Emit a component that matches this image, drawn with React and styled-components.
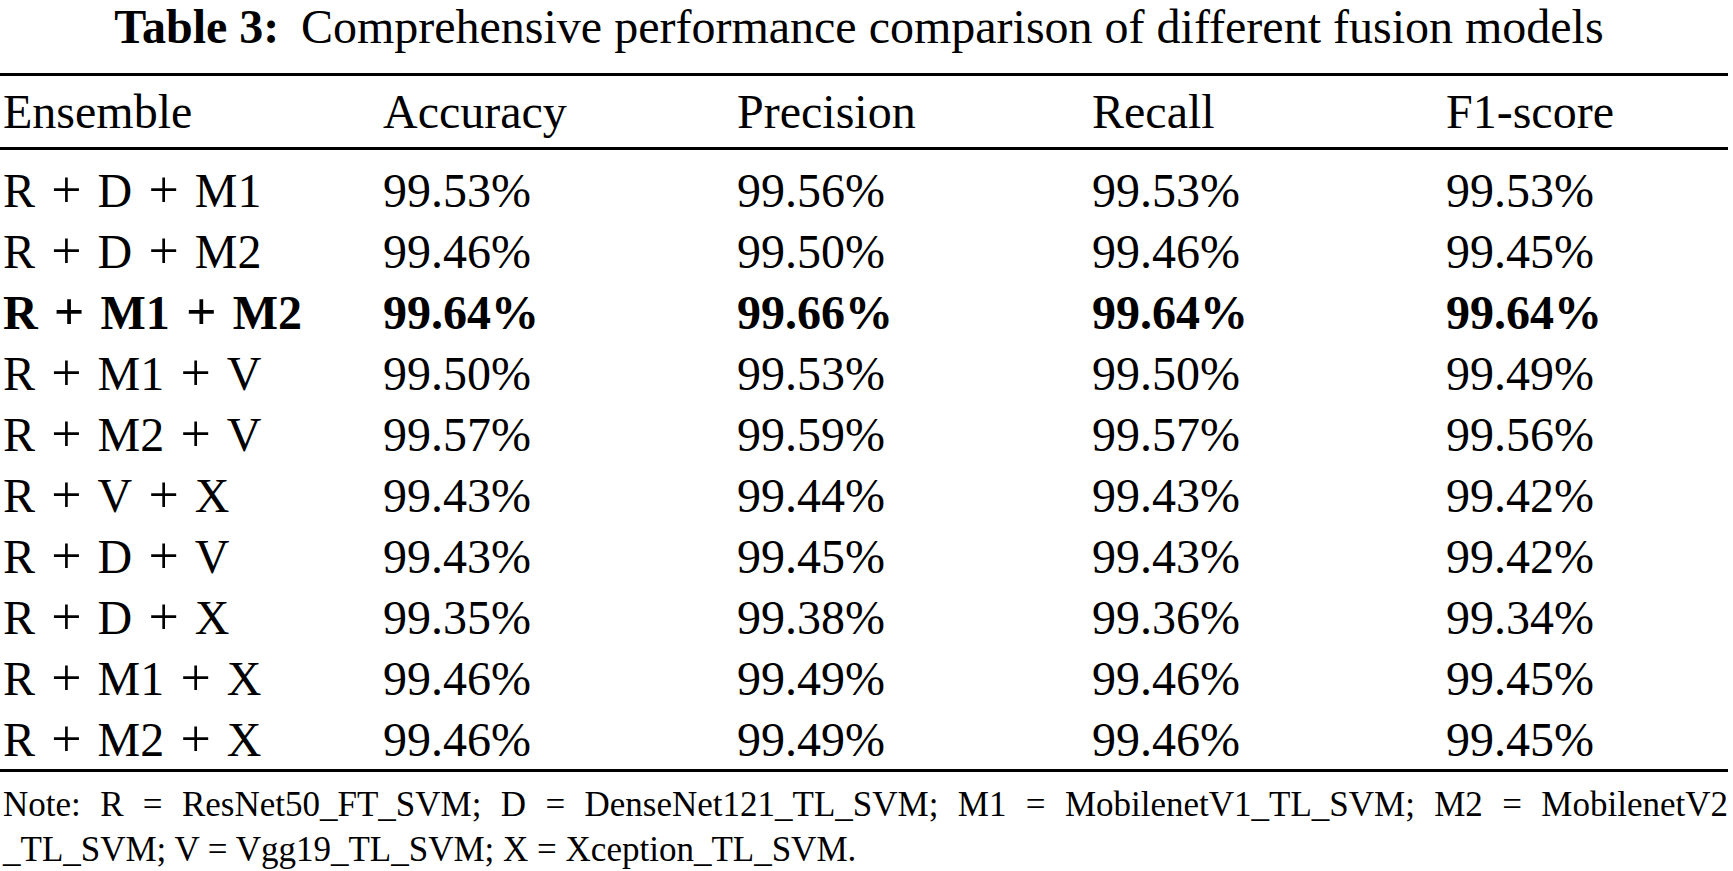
import React from "react";
import styled, { createGlobalStyle } from "styled-components";

const GlobalStyle = createGlobalStyle`
  html, body {
    margin: 0;
    padding: 0;
    background: #ffffff;
  }
  body {
    font-family: "Liberation Serif", "Times New Roman", serif;
    color: #000000;
  }
`;

const rows = [
  { name: "R + D + M1", values: ["99.53%", "99.56%", "99.53%", "99.53%"] },
  { name: "R + D + M2", values: ["99.46%", "99.50%", "99.46%", "99.45%"] },
  { name: "R + M1 + M2", values: ["99.64%", "99.66%", "99.64%", "99.64%"], best: true },
  { name: "R + M1 + V", values: ["99.50%", "99.53%", "99.50%", "99.49%"] },
  { name: "R + M2 + V", values: ["99.57%", "99.59%", "99.57%", "99.56%"] },
  { name: "R + V + X", values: ["99.43%", "99.44%", "99.43%", "99.42%"] },
  { name: "R + D + V", values: ["99.43%", "99.45%", "99.43%", "99.42%"] },
  { name: "R + D + X", values: ["99.35%", "99.38%", "99.36%", "99.34%"] },
  { name: "R + M1 + X", values: ["99.46%", "99.49%", "99.46%", "99.45%"] },
  { name: "R + M2 + X", values: ["99.46%", "99.49%", "99.46%", "99.45%"] },
];

const headers = ["Ensemble", "Accuracy", "Precision", "Recall", "F1-score"];

const Page = styled.div`
  width: 1728px;
  display: flex;
  flex-direction: column;
`;

const Caption = styled.div`
  font-size: 48px;
  line-height: 53px;
  text-align: center;
  padding-right: 10px;
  margin-bottom: 20px;
  white-space: nowrap;
`;

const CaptionLabel = styled.span`
  font-weight: 700;
  margin-right: 0.45em;
`;

const Rule = styled.div`
  height: 3px;
  background: #000000;
`;

const Row = styled.div`
  display: grid;
  grid-template-columns: 380px 354px 355px 354px 1fr;
  height: ${(p) => p.$height}px;
  align-items: center;
  font-size: 48px;
  line-height: ${(p) => p.$height}px;
  font-weight: ${(p) => (p.$bold ? 700 : 400)};
`;

const Cell = styled.div`
  padding-left: 3px;
  white-space: nowrap;
`;

const Plus = styled.span`
  font-size: 1.12em;
  margin: 0 0.3em;
`;

const Body = styled.div`
  display: flex;
  flex-direction: column;
  padding-top: 9px;
`;

const Note = styled.div`
  margin-top: 10px;
  font-size: 35px;
  line-height: 45px;
  padding-left: 3px;
`;

const NoteLine = styled.div`
  text-align: ${(p) => (p.$justify ? "justify" : "left")};
  text-align-last: ${(p) => (p.$justify ? "justify" : "auto")};
  white-space: ${(p) => (p.$justify ? "normal" : "nowrap")};
`;

const Ensemble = ({ name }) => {
  const parts = name.split(" + ");
  return parts.map((part, i) => (
    <React.Fragment key={i}>
      {i > 0 && <Plus>+</Plus>}
      {part}
    </React.Fragment>
  ));
};

export default function App() {
  return (
    <Page>
      <GlobalStyle />
      <Caption>
        <CaptionLabel>Table 3:</CaptionLabel>
        Comprehensive performance comparison of different fusion models
      </Caption>
      <Rule />
      <Row $height={71}>
        {headers.map((h) => (
          <Cell key={h}>{h}</Cell>
        ))}
      </Row>
      <Rule />
      <Body>
        {rows.map((r) => (
          <Row key={r.name} $height={61} $bold={r.best}>
            <Cell>
              <Ensemble name={r.name} />
            </Cell>
            {r.values.map((v, i) => (
              <Cell key={i}>{v}</Cell>
            ))}
          </Row>
        ))}
      </Body>
      <Rule />
      <Note>
        <NoteLine $justify>
          Note: R = ResNet50_FT_SVM; D = DenseNet121_TL_SVM; M1 = MobilenetV1_TL_SVM; M2 = MobilenetV2
        </NoteLine>
        <NoteLine>_TL_SVM; V = Vgg19_TL_SVM; X = Xception_TL_SVM.</NoteLine>
      </Note>
    </Page>
  );
}
